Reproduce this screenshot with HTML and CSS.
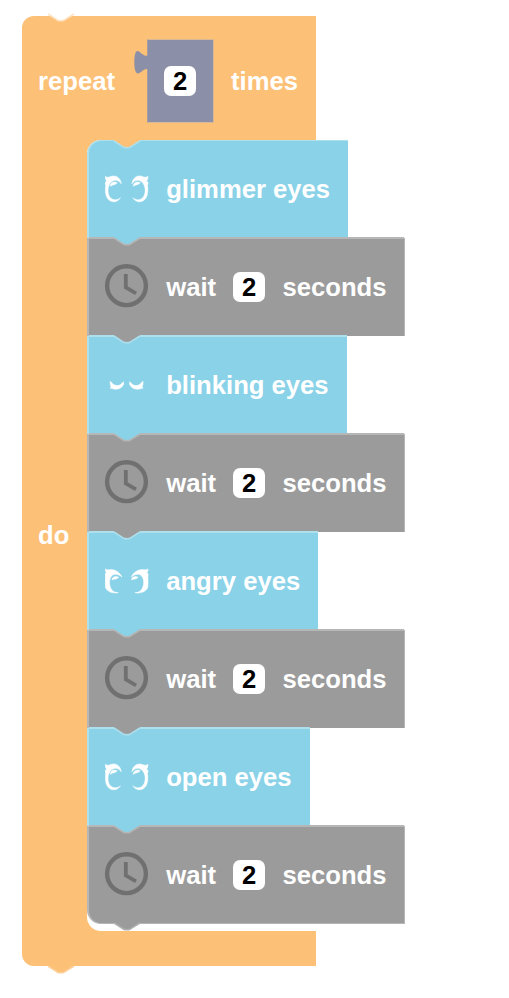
FILE: index.html
```
<!DOCTYPE html>
<html lang="en">
<head>
<meta charset="utf-8">
<title>Blocks</title>
<link rel="stylesheet" href="styles.css">
</head>
<body>
<svg class="defs" aria-hidden="true">
  <symbol id="tab" viewBox="0 0 28 10"><path class="tab-fill" d="M0 0H26V1L16 7.2Q13 8.2 10 7.2L0 1Z"/><path class="tab-line" d="M0 1L9 6.9Q13 8.5 16.5 6.9L26 1"/></symbol>
  <symbol id="clock" viewBox="0 0 44 44" overflow="visible"><circle cx="21.5" cy="20.7" r="19.4" fill="none" stroke="#707070" stroke-width="4.4"/><path d="M20.8 9V22.5L31 28.3" fill="none" stroke="#707070" stroke-width="3.8"/></symbol>
  <symbol id="open" viewBox="0 0 44 44">
    <g class="eye-shape"><path id="open-eye" d="M.2 9.3Q2.2 11 4.5 9.9C10.5 7.2 15.5 10.5 16.3 16.8C13.5 12.8 9.5 12.4 6.4 14.9C1.8 18.5 2 28.6 6.4 31.6C9.2 33.6 12.8 33 15.4 30.7C12.5 36 5.8 36.2 2.4 31.3C.2 28 0 22.5 .7 18.5L0 15.5L1.6 14.4Q.1 12.7.2 9.3Z"/><use href="#open-eye" transform="matrix(-1 0 0 1 43.2 0)"/><path d="M5.2 19.3C5.4 15.6 9.2 14.2 12.2 15.7C10.5 18.2 8.2 17.2 5.2 19.3ZM28.2 19.3C28.4 15.6 32.2 14.2 35.2 15.7C33.5 18.2 31.2 17.2 28.2 19.3Z"/></g>
  </symbol>
  <symbol id="angry" viewBox="0 0 44 44">
    <g class="eye-shape"><path id="angry-eye" d="M.2 9.9Q2 11.3 5.2 10.6C10.5 10.4 14.8 13.5 17 18C13.2 14.9 9 14.4 6.4 17.2C3 21.5 4.4 30.5 9.2 32.8Q11.2 33.8 13.3 33.5C9.2 35 2.2 33.2.5 28.6C0 25.5.1 21 .3 18L.1 15L1.2 13.5Q0 12 .2 9.9Z"/><use href="#angry-eye" transform="matrix(-1 0 0 1 43.2 0)"/><path d="M7 20.9C7.2 17.9 10.4 16.8 13.7 18.2C11.8 20.6 9.4 19.7 7 20.9ZM26.5 20.9C26.7 17.9 29.9 16.8 33.2 18.2C31.3 20.6 28.9 19.7 26.5 20.9Z"/></g>
  </symbol>
  <symbol id="blink" viewBox="0 0 44 44">
    <g class="eye-shape"><path id="lash" d="M5.1 18.2Q6.4 19 7.3 20.3C9.8 23 14.3 23.7 17 20.1L18.6 18.7V21.5C16.2 26.4 10 27.3 6.6 25.3L5.2 25.4L6 23.8Q4.9 21.3 5.1 18.2Z"/><use href="#lash" transform="matrix(-1 0 0 1 43.2 0)"/></g>
  </symbol>
</svg>
<main class="workspace">
  <section class="repeat">
    <header class="head">
      <svg class="tab tab-outer-top"><use href="#tab"/></svg>
      <span class="label repeat-label">repeat</span>
      <div class="value">
        <svg class="plug" viewBox="0 0 15 28"><path d="M15 1V4C14.5 8 11.5 7.5 7 4.2C2-1 .5 4 .3 13C.3 22 2 27 7 23C11 19.5 14.5 18.5 15 23Z" fill="#8c8fa8"/></svg>
        <span class="field">2</span>
      </div>
      <span class="label">times</span>
    </header>
    <div class="body">
      <div class="side"><span class="label">do</span></div>
      <div class="stack">
        <div class="block eyes glimmer"><svg class="tab from-loop"><use href="#tab"/></svg><svg class="icon"><use href="#open"/></svg><span class="label">glimmer eyes</span></div>
        <div class="block wait"><svg class="tab"><use href="#tab"/></svg><svg class="icon"><use href="#clock"/></svg><span class="label">wait</span><span class="field">2</span><span class="label">seconds</span></div>
        <div class="block eyes blinking"><svg class="tab"><use href="#tab"/></svg><svg class="icon"><use href="#blink"/></svg><span class="label">blinking eyes</span></div>
        <div class="block wait"><svg class="tab"><use href="#tab"/></svg><svg class="icon"><use href="#clock"/></svg><span class="label">wait</span><span class="field">2</span><span class="label">seconds</span></div>
        <div class="block eyes angry"><svg class="tab"><use href="#tab"/></svg><svg class="icon"><use href="#angry"/></svg><span class="label">angry eyes</span></div>
        <div class="block wait"><svg class="tab"><use href="#tab"/></svg><svg class="icon"><use href="#clock"/></svg><span class="label">wait</span><span class="field">2</span><span class="label">seconds</span></div>
        <div class="block eyes open"><svg class="tab"><use href="#tab"/></svg><svg class="icon"><use href="#open"/></svg><span class="label">open eyes</span></div>
        <div class="block wait last"><svg class="tab"><use href="#tab"/></svg><svg class="icon"><use href="#clock"/></svg><span class="label">wait</span><span class="field">2</span><span class="label">seconds</span><svg class="tab tab-end"><use href="#tab"/></svg></div>
      </div>
    </div>
    <footer class="foot"><svg class="tab tab-outer-end"><use href="#tab"/></svg></footer>
  </section>
</main>
</body>
</html>
```
FILE: styles.css
```
* { box-sizing: border-box; }
body {
  margin: 0;
  background: #fff;
  font: bold 25.65px/30px "Liberation Sans", Arial, sans-serif;
}
.defs { position: absolute; width: 0; height: 0; }
.workspace { height: 998px; padding: 16px 0 0 22px; overflow: hidden; }
.repeat { width: 294px; }
.label { color: #fff; white-space: nowrap; }
.head {
  position: relative;
  display: flex;
  align-items: center;
  height: 124px;
  padding: 6px 0 0 16px;
  background: #fcc076;
  border-radius: 12px 0 0 0;
}
.repeat-label { width: 108.5px; }
.value {
  position: relative;
  display: flex;
  align-items: center;
  justify-content: center;
  width: 67.5px;
  height: 84px;
  margin-right: 17px;
  background: #8c8fa8;
  border: 1px solid #d9b896;
  border-left-color: #a89b9f;
}
.plug { position: absolute; left: -14px; top: 9px; width: 15px; height: 28px; }
.field {
  flex: none;
  width: 32px;
  height: 30px;
  border-radius: 7px;
  background: #fff;
  color: #000;
  text-align: center;
}
.body { display: flex; height: 791px; background: #fcc076; }
.side {
  flex: none;
  display: flex;
  align-items: center;
  width: 65px;
  padding: 0 0 2px 16px;
}
.stack {
  flex: none;
  width: 318px;
  height: 791px;
  background: #fff;
  border-radius: 14px 0 0 14px;
}
.foot {
  position: relative;
  height: 35px;
  background: #fcc076;
  border-radius: 0 0 0 12px;
}
.block {
  position: relative;
  display: flex;
  align-items: center;
  gap: 17.2px;
  height: 98px;
  padding-left: 16px;
  border-left: 2px solid;
}
.block::before {
  content: "";
  position: absolute;
  left: 0;
  right: 0;
  top: -1px;
  height: 2px;
  background: var(--edge);
}
.eyes { --edge: #addfec; background: #8ad2e8; border-color: var(--edge); }
.wait { --edge: #b6b6b6; width: 318px; background: #9b9b9b; border-color: var(--edge); border-right: 1px solid var(--edge); }
.glimmer { width: 261px; padding-bottom: 2px; border-top-left-radius: 14px; border-top: 1px solid var(--edge); }
.glimmer::before { display: none; }
.blinking { width: 260px; }
.angry { width: 231px; }
.open { width: 223px; }
.last { border-bottom: 1px solid var(--edge); border-bottom-left-radius: 14px; }
.icon { flex: none; width: 44px; height: 44px; overflow: visible; }
.eye-shape { fill: #fff; stroke: #fff; stroke-width: .5; }
.tab { position: absolute; left: 25px; top: -1px; width: 28px; height: 10px; }
.tab-fill { fill: var(--tab); }
.tab-line { fill: none; stroke: var(--line); stroke-width: 1.6; }
.eyes .tab { --tab: #9b9b9b; --line: #addfec; }
.wait .tab { --tab: #8ad2e8; --line: #b6b6b6; }
.eyes .from-loop { --tab: #fcc076; }
.wait .tab-end { --tab: #9b9b9b; --line: #b0b0b0; top: 96px; }
.tab-outer-top { --tab: #fff; --line: #fde3c4; left: 26px; top: -3px; }
.tab-outer-end { --tab: #fcc076; --line: #fdcf98; left: 26px; top: 34px; }
```
